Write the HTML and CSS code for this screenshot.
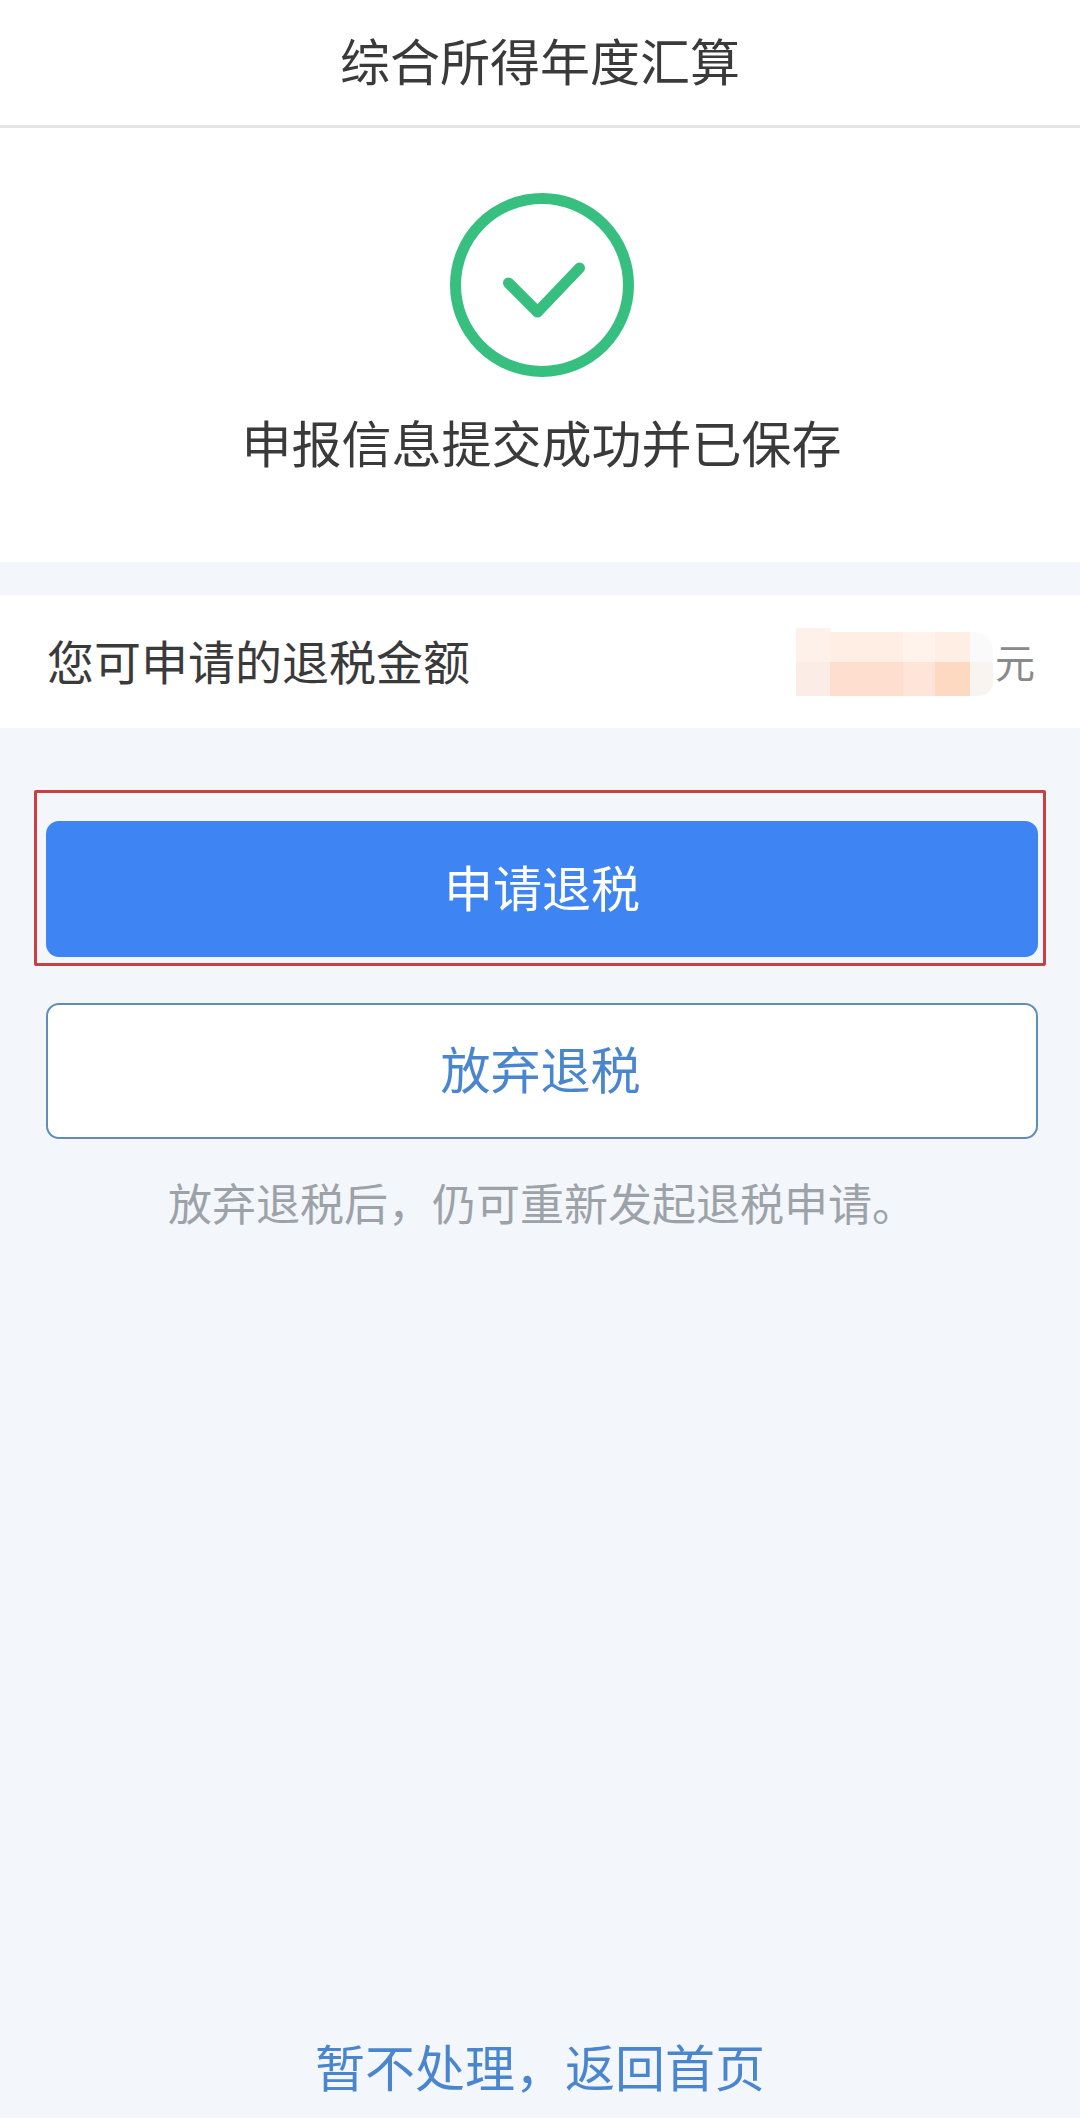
FILE: index.html
```html
<!DOCTYPE html>
<html lang="zh-CN">
<head>
<meta charset="utf-8">
<title>综合所得年度汇算</title>
<link rel="stylesheet" href="styles.css">
</head>
<body>
<div class="page">
  <header class="topbar">综合所得年度汇算</header>
  <section class="result">
    <svg class="result-icon" viewBox="0 0 184 184" aria-hidden="true">
      <circle class="ring" cx="92" cy="92" r="86.5"/>
      <path class="tick" d="M58.5 90 L87.5 119 L129.5 75"/>
    </svg>
    <p class="result-text">申报信息提交成功并已保存</p>
  </section>
  <section class="amount">
    <span class="amount-label">您可申请的退税金额</span>
    <span class="amount-value">
      <span class="mosaic">
        <i class="m a1"></i><i class="m a2"></i><i class="m a3"></i><i class="m a4"></i><i class="m a5"></i>
        <i class="m b1"></i><i class="m b2"></i><i class="m b3"></i><i class="m b4"></i><i class="m b5"></i>
      </span>
      <span class="unit">元</span>
    </span>
  </section>
  <section class="actions">
    <div class="primary-wrap">
      <button class="btn btn-primary"><span class="btn-label">申请退税</span></button>
      <span class="annotation"></span>
    </div>
    <button class="btn btn-outline"><span class="btn-label">放弃退税</span></button>
    <p class="hint">放弃退税后，仍可重新发起退税申请。</p>
  </section>
  <footer class="footer"><a class="home-link">暂不处理，返回首页</a></footer>
</div>
</body>
</html>
```
FILE: styles.css
```css
* { box-sizing: border-box; }
html, body { margin: 0; padding: 0; }
body {
  background: #f3f7fb;
  font-family: "Noto Sans CJK SC", "Noto Sans", sans-serif;
  color: #3a3a3a;
}
.page {
  height: 2118px;
  display: flex;
  flex-direction: column;
}
.topbar {
  height: 128px;
  background: #fff;
  border-bottom: 3px solid #e4e4e4;
  display: flex;
  align-items: center;
  justify-content: center;
  padding-bottom: 8px;
  font-size: 50px;
  line-height: 1;
}
.result {
  height: 434px;
  background: #fff;
  display: flex;
  flex-direction: column;
  align-items: center;
  padding-top: 65px;
  padding-left: 3px;
}
.result-icon { width: 184px; height: 184px; display: block; }
.ring { fill: none; stroke: #37bf80; stroke-width: 11; }
.tick {
  fill: none;
  stroke: #37bf80;
  stroke-width: 11;
  stroke-linecap: round;
  stroke-linejoin: round;
}
.result-text {
  margin: 29px 0 0;
  font-size: 50px;
  line-height: 70px;
}
.amount {
  margin-top: 33px;
  height: 133px;
  background: #fff;
  display: flex;
  align-items: center;
  justify-content: space-between;
  padding: 0 46px 0 47px;
}
.amount-label { font-size: 47px; line-height: 60px; margin-top: -3px; }
.amount-value { display: flex; align-items: center; }
.unit { font-size: 40px; line-height: 50px; color: #8a8a8a; margin: -2px -1px 0 2px; }
.mosaic {
  width: 197px;
  height: 68px;
  display: grid;
  grid-template-columns: 34px 73px 32px 35px 23px;
  grid-template-rows: 34px 34px;
}
.m { display: block; }
.a1 { background: #fdf1ea; }
.a2 { background: #feeee3; margin-top: 4px; }
.a3 { background: #fff3ec; margin-top: 4px; }
.a4 { background: #ffeee3; margin-top: 4px; }
.a5 { background: #fafafa; margin-top: 4px; border-top-right-radius: 20px; }
.b1 { background: #fcece6; }
.b2 { background: #fedfcf; }
.b3 { background: #ffe5d9; }
.b4 { background: #fdd9c1; }
.b5 { background: #f8f4f0; border-bottom-right-radius: 14px; }
.actions {
  padding: 93px 42px 0 46px;
  display: flex;
  flex-direction: column;
}
.primary-wrap { position: relative; }
.btn {
  display: flex;
  align-items: center;
  justify-content: center;
  width: 100%;
  height: 136px;
  border-radius: 13px;
  font-family: inherit;
  font-size: 49px;
  line-height: 1;
  padding: 0 0 8px;
}
.btn-primary { background: #3f84f3; border: 0; color: #fff; }
.annotation {
  position: absolute;
  left: -12px;
  right: -8px;
  top: -31px;
  bottom: -9px;
  border: 3px solid #c8403f;
  border-radius: 2px;
}
.btn-outline {
  margin-top: 46px;
  background: #fff;
  border: 2px solid #5f8db8;
  color: #4a86d0;
  font-size: 50px;
  padding-right: 3px;
}
.hint {
  margin: 33px 0 0;
  text-align: center;
  font-size: 44px;
  line-height: 60px;
  color: #9da1a8;
}
.footer {
  margin-top: auto;
  padding-bottom: 18px;
  text-align: center;
}
.home-link {
  font-size: 50px;
  line-height: 70px;
  color: #4a86d0;
}
```
